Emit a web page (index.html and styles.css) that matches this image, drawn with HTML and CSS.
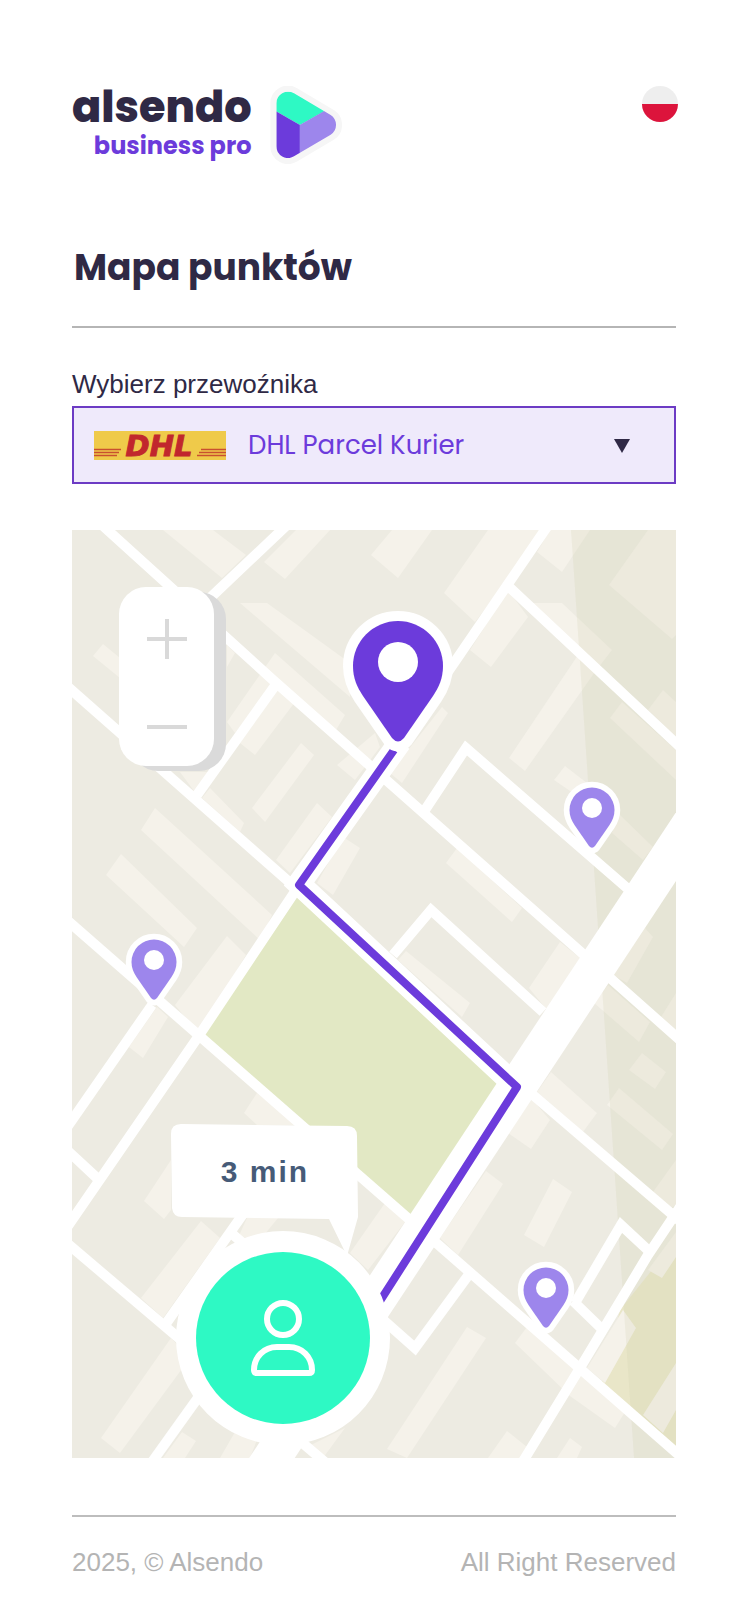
FILE: index.html
```html
<!DOCTYPE html>
<html lang="pl">
<head>
    <meta charset="UTF-8">
    <meta name="viewport" content="width=device-width, initial-scale=1.0">
    <title>Mapa punktów</title>
    <link rel="stylesheet" href="styles.css">
</head>
<body>
    <header class="header">
        <a class="logo" href="#">
            <span class="logo-text">
                <span class="logo-name">alsendo</span>
                <span class="logo-sub">business pro</span>
            </span>
            <svg class="logo-mark" viewBox="665 78 216 234" aria-hidden="true">
                <defs>
                    <clipPath id="mark">
                        <path d="M684 130A35 35 0 0 1 737 100L847 165A35 35 0 0 1 847 224L737 289A35 35 0 0 1 684 259Z"/>
                    </clipPath>
                </defs>
                <path d="M684 130A35 35 0 0 1 737 100L847 165A35 35 0 0 1 847 224L737 289A35 35 0 0 1 684 259Z" fill="#f6f6f6" stroke="#f6f6f6" stroke-width="36"/>
                <g clip-path="url(#mark)">
                    <path d="M680 90H880V125L755 195L680 152Z" fill="#2ef9c4"/>
                    <path d="M680 152L755 195V300H680Z" fill="#6c3bdb"/>
                    <path d="M754 195L880 123V300H754Z" fill="#9d86ec"/>
                </g>
            </svg>
        </a>
        <button class="lang" type="button" aria-label="Polski"></button>
    </header>

    <main>
        <h1>Mapa punktów</h1>

        <label class="carrier-label" for="carrier">Wybierz przewoźnika</label>
        <div class="carrier">
            <select id="carrier">
                <option>DHL Parcel Kurier</option>
            </select>
            <svg class="carrier-logo" viewBox="0 0 132 29" aria-hidden="true">
                <rect width="132" height="29" fill="#efca4a"/>
                <path d="M0 18.5H27M0 21.5H25M0 24.5H23M107 18.5H132M105 21.5H132M103 24.5H132" stroke="#c9502f" stroke-width="1.5"/>
                <text class="dhl" x="65" y="25" text-anchor="middle">DHL</text>
            </svg>
            <svg class="carrier-arrow" viewBox="0 0 16 16" aria-hidden="true">
                <path d="M0 2H16L8 16Z" fill="#2f2945"/>
            </svg>
        </div>

        <div class="map">
            <svg class="map-canvas" viewBox="72 530 604 928">
                <defs>
                    <path id="pin" d="M0-45A45 45 0 0 1 45 0C45 12 41 21 35 30L6 72Q0 79-6 72L-35 30C-41 21-45 12-45 0A45 45 0 0 1 0-45Z"/>
                </defs>

                <rect x="72" y="530" width="604" height="928" fill="#edebe2"/>
                <!-- parks -->
                <path d="M298 896L500 1083L411 1216L203 1035Z" fill="#e2e8c4"/>
                <path d="M676 1240V1458L600 1390L620 1310Z" fill="#e9e6c8"/>

                <!-- buildings -->
                <g fill="#f5f2ea">
                    <path d="M163 530H213L246 555L222 578ZM296 530H330L285 579L264 562ZM392 530H432L398 578L371 555ZM488 530H545L475 622L444 593Z"/>
                    <path d="M240 603H267L350 663V697ZM103 644L120 658V678L93 656ZM275 653L345 715L336 730L277 680L235 733L227 722Z"/>
                    <path d="M278 690L295 702L255 755L240 743ZM227 645L235 653L227 667ZM301 743L314 755L265 822L252 808Z"/>
                    <path d="M155 808L272 915L260 940L141 830ZM121 854L197 928L184 947L106 875ZM227 936L246 955L198 1033L175 1005ZM157 1007L168 1017L143 1058L129 1047Z"/>
                    <path d="M180 772H212L197 795ZM210 788L244 823L240 832L202 798ZM317 803L332 817L290 873L276 860ZM343 837L360 848L333 895L317 883Z"/>
                    <path d="M375 733L380 747L355 780L337 765ZM442 707L448 713L402 783L390 773ZM508 590L528 617L491 667L470 650Z"/>
                    <path d="M532 603H562L612 650L595 672L525 771L509 758L578 655ZM550 530H590L562 572L537 552ZM648 530H676V635L672 639L609 585Z"/>
                    <path d="M663 690L676 702V737L648 710ZM622 702L676 750V780L610 718ZM565 766L587 783L573 793L554 780ZM618 813L653 847L643 860L612 833Z"/>
                    <path d="M457 848L522 908L512 922L446 863ZM560 942L580 958L547 1010L529 988ZM406 951L470 1003L462 1017L398 960Z"/>
                    <path d="M645 928L653 937L627 983L613 975ZM608 985L650 1022L639 1042L594 1003ZM676 993V1030L661 1017ZM642 1053L666 1072L655 1089L629 1070Z"/>
                    <path d="M619 1088L673 1134L662 1150L607 1105ZM551 1072L597 1113L583 1132L537 1092ZM532 1099L550 1120L531 1149L508 1133Z"/>
                    <path d="M676 1160V1205L668 1210L653 1192ZM486 1171L503 1184L458 1255L440 1238ZM553 1179L572 1192L544 1247L524 1235ZM385 1203L405 1222L368 1270L350 1253Z"/>
                    <path d="M467 1327L486 1338L407 1458L387 1449ZM507 1431L527 1447L520 1458H488ZM570 1438L582 1447L577 1458H557ZM527 1327L625 1412L615 1428L570 1396L515 1343Z"/>
                    <path d="M623 1310L636 1328L605 1383L587 1368ZM676 1232V1257L662 1278L648 1270ZM676 1363V1410L663 1433L643 1415Z"/>
                    <path d="M257 1093L297 1125H257L244 1113ZM171 1160V1210L164 1219L144 1201ZM201 1221L220 1238L163 1318L141 1298ZM247 1218H278L260 1240H237Z"/>
                    <path d="M171 1338L190 1358L120 1453L101 1438ZM182 1432L196 1441L185 1458H163ZM235 1432H260L250 1458H220ZM345 1428L323 1458L307 1447Z"/>
                </g>

                <!-- shaded district on the right -->
                <path d="M571 530H676V1458H634Z" fill="#cccbaa" opacity="0.2"/>

                <!-- streets -->
                <g fill="none" stroke="#fff" stroke-width="10">
                    <path d="M102 525L273 680L583 954L680 1040"/>
                    <path d="M286 526L210 598"/>
                    <path d="M68 687L296 888"/>
                    <path d="M277 683L197 795"/>
                    <path d="M549 524L400 742"/>
                    <path d="M296 890L198 1037L68 1226"/>
                    <path d="M68 921L680 1456"/>
                    <path d="M152 1005L68 1126"/>
                    <path d="M68 1151L97 1178"/>
                    <path d="M68 1244L326 1463"/>
                    <path d="M305 1126L165 1325M230 1232L262 1260"/>
                    <path d="M225 1360L152 1462"/>
                    <path d="M380 1317L415 1348L470 1273"/>
                    <path d="M393 955L431 910L543 1012"/>
                    <path d="M425 810L466 748L627 888"/>
                    <path d="M508 586L680 747"/>
                    <path d="M533 1095L680 1221"/>
                    <path d="M680 1207L648 1255L580 1368L522 1463"/>
                    <path d="M575 1303L621 1225L650 1252M573 1301L604 1331"/>
                    <path d="M400 742L299 884L517 1087" stroke-width="23"/>
                    <path d="M761 718L264 1470" stroke-width="38"/>
                </g>

                <!-- route -->
                <path d="M394 750L299 885L517 1087L380 1301" fill="none" stroke="#6c3bdb" stroke-width="8" stroke-linejoin="round"/>

                <!-- pick-up points -->
                <g stroke="#fff" stroke-width="20">
                    <use href="#pin" transform="translate(398 666)"/>
                    <use href="#pin" transform="translate(592 810) scale(0.5)" stroke-width="23"/>
                    <use href="#pin" transform="translate(154 962) scale(0.5)" stroke-width="23"/>
                    <use href="#pin" transform="translate(546 1290) scale(0.5)" stroke-width="23"/>
                </g>
                <use href="#pin" transform="translate(398 666)" fill="#6c3bdb"/>
                <g fill="#9d86ec">
                    <use href="#pin" transform="translate(592 810) scale(0.5)"/>
                    <use href="#pin" transform="translate(154 962) scale(0.5)"/>
                    <use href="#pin" transform="translate(546 1290) scale(0.5)"/>
                </g>
                <g fill="#fff">
                    <circle cx="398" cy="662" r="20"/>
                    <circle cx="592" cy="808" r="10"/>
                    <circle cx="154" cy="960" r="10"/>
                    <circle cx="546" cy="1288" r="10"/>
                </g>

                <!-- travel time -->
                <path d="M181 1124L347 1126Q357 1126 357 1136L358 1217L347 1256L329 1219L182 1217Q173 1217 172 1208L171 1134Q171 1124 181 1124Z" fill="#fff"/>
                <text class="time" x="265" y="1182" text-anchor="middle">3 min</text>

                <!-- user position -->
                <circle cx="283" cy="1338" r="107" fill="#fff"/>
                <ellipse cx="283" cy="1338" rx="87" ry="86" fill="#2ef9c4"/>
                <g fill="none" stroke="#fff" stroke-width="6">
                    <circle cx="283" cy="1319" r="16"/>
                    <path d="M254 1370C254 1357 264 1347 277 1347H289C302 1347 312 1357 312 1370Q312 1373 309 1373H257Q254 1373 254 1370Z"/>
                </g>
            </svg>

            <div class="zoom">
                <button type="button" aria-label="Przybliż">
                    <svg viewBox="0 0 40 40"><path d="M20 0V40M0 20H40" stroke="#d9d9d9" stroke-width="4"/></svg>
                </button>
                <button type="button" aria-label="Oddal">
                    <svg viewBox="0 0 40 40"><path d="M0 20H40" stroke="#d9d9d9" stroke-width="4"/></svg>
                </button>
            </div>
        </div>
    </main>

    <footer class="footer">
        <span>2025, © Alsendo</span>
        <span>All Right Reserved</span>
    </footer>
</body>
</html>
```
FILE: styles.css
```css
* {
    box-sizing: border-box;
}
body {
    margin: 0;
    padding: 86px 74px 40px 72px;
    background: #fff;
    color: #2f2945;
    font-family: "Liberation Sans", Arial, sans-serif;
    font-size: 26px;
}

/* Header */
.header {
    display: flex;
    justify-content: space-between;
    align-items: flex-start;
}
.logo {
    display: flex;
    gap: 19px;
    color: inherit;
    text-decoration: none;
    font-family: Poppins, Inter, sans-serif;
}
.logo-text {
    display: flex;
    flex-direction: column;
    align-items: flex-end;
}
.logo-name {
    font-size: 43px;
    font-weight: 800;
    line-height: 42px;
}
.logo-sub {
    color: #6c3bdb;
    font-size: 24px;
    font-weight: 700;
    line-height: 36px;
}
.logo-mark {
    width: 72px;
    height: 78px;
}
.lang {
    width: 36px;
    height: 36px;
    margin-right: -2px;
    padding: 0;
    border: 0;
    border-radius: 50%;
    background: linear-gradient(#eee 50%, #dc143c 50%);
    cursor: pointer;
}

h1 {
    margin: 81px 0 41px;
    padding: 0 2px 35px;
    border-bottom: 2px solid #b5b5b5;
    font-family: Poppins, Inter, sans-serif;
    font-size: 36px;
    font-weight: 700;
    line-height: 46px;
}

/* Carrier drop-down */
.carrier-label {
    display: block;
    margin-bottom: 7px;
    line-height: 30px;
}
.carrier {
    display: grid;
    grid-template-columns: 1fr auto;
    align-items: center;
    margin-bottom: 46px;
}
.carrier select {
    grid-area: 1 / 1 / 2 / 3;
    width: 100%;
    height: 78px;
    padding: 0 64px 0 174px;
    border: 2px solid #6c3bc4;
    border-radius: 0;
    background: #efeafb;
    color: #6c3bdb;
    font-family: Poppins, Inter, sans-serif;
    font-size: 26px;
    appearance: none;
    cursor: pointer;
}
.carrier-logo {
    grid-area: 1 / 1;
    width: 132px;
    height: 29px;
    margin-left: 22px;
    overflow: visible;
    pointer-events: none;
}
.carrier-arrow {
    grid-area: 1 / 2;
    width: 16px;
    height: 16px;
    margin-right: 46px;
    pointer-events: none;
}
.dhl {
    fill: #c1272d;
    stroke: #c1272d;
    stroke-width: 1;
    font-family: "DejaVu Sans", sans-serif;
    font-size: 29px;
    font-weight: 700;
    font-style: italic;
}

/* Map */
.map {
    position: relative;
}
.map-canvas {
    display: block;
    width: 100%;
    height: auto;
}
.time {
    fill: #465b78;
    font-size: 30px;
    font-weight: 700;
    letter-spacing: 2px;
}
.zoom {
    position: absolute;
    top: 57px;
    left: 47px;
    display: flex;
    flex-direction: column;
    gap: 12px;
    padding: 14px 0 1px;
    border-radius: 27px;
    background: #fff;
    box-shadow: 12px 5px 0 #dadada;
}
.zoom button {
    display: grid;
    place-items: center;
    width: 95px;
    height: 76px;
    padding: 0;
    border: 0;
    background: none;
    cursor: pointer;
}
.zoom svg {
    width: 40px;
    height: 40px;
}

/* Footer */
.footer {
    display: flex;
    justify-content: space-between;
    margin-top: 57px;
    padding-top: 30px;
    border-top: 2px solid #bdbdbd;
    color: #b4b4b4;
    line-height: 30px;
}
```
